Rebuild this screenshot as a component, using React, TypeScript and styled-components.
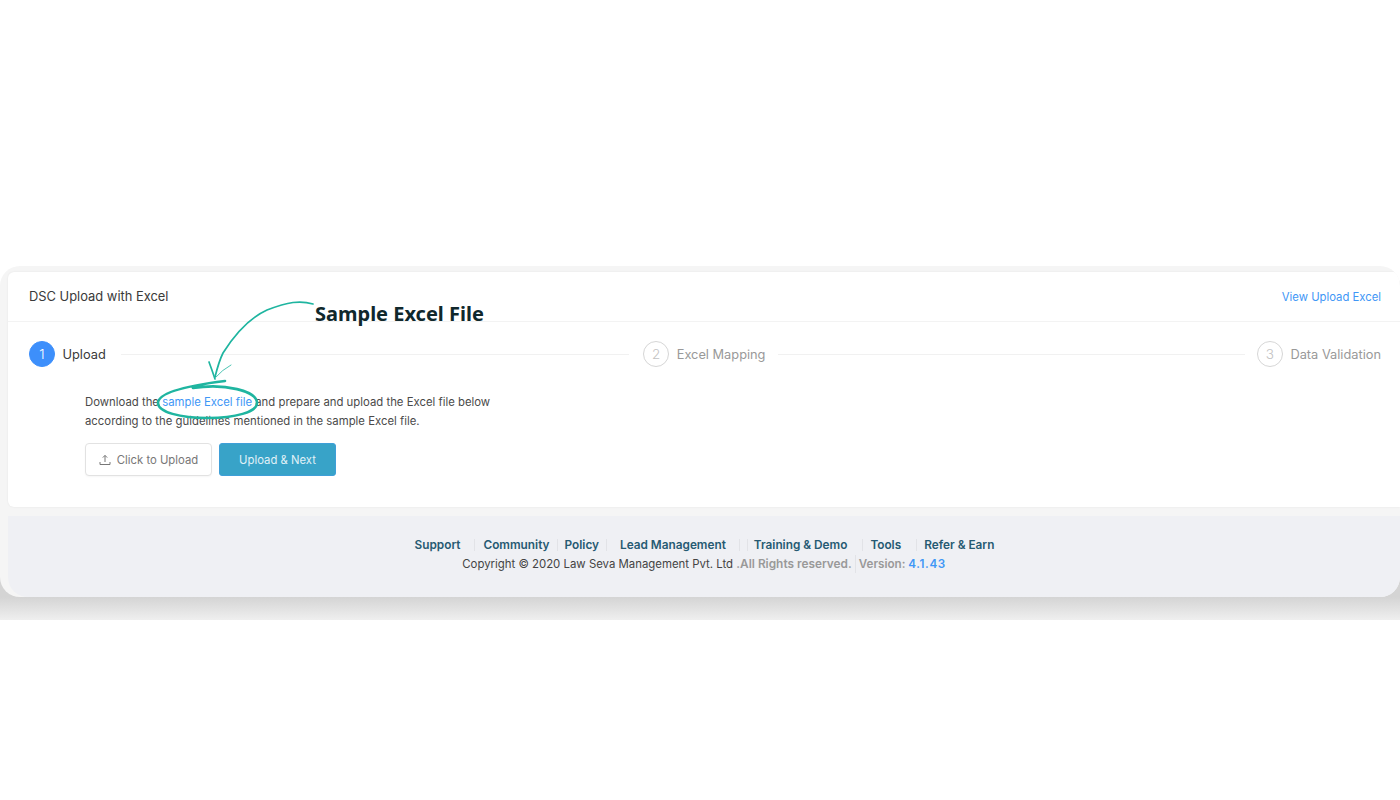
import React from 'react'
import styled, { createGlobalStyle } from 'styled-components'

const GlobalStyle = createGlobalStyle`
  html, body {
    margin: 0;
    padding: 0;
    background: #fff;
    font-family: Inter, "Liberation Sans", sans-serif;
    overflow: hidden;
  }
`

const Page = styled.div`
  width: 1400px;
  height: 800px;
  padding-top: 266px;
  box-sizing: border-box;
`

const ShadowBand = styled.div`
  padding-bottom: 23px;
  background: linear-gradient(
    to bottom,
    #fff 0,
    #fff 200px,
    #d4d4d4 200px,
    #d4d4d4 331px,
    #efefef 354px
  );
`

const Frame = styled.div`
  position: relative;
  height: 331px;
  box-sizing: border-box;
  padding: 6px 0 0 8px;
  background: #f5f5f5;
  border-radius: 20px;
  overflow: hidden;
`

const Card = styled.section`
  height: 235px;
  background: #fff;
  border-radius: 6px 0 0 6px;
  box-shadow: 0 0 2px rgba(0, 0, 0, 0.08);
`

const CardHeader = styled.header`
  height: 49px;
  display: flex;
  align-items: center;
  justify-content: space-between;
  padding: 0 19px 0 21px;
  border-bottom: 1px solid #f3f3f3;
`

const Title = styled.h1`
  margin: 0 0 1px;
  font-size: 12.9px;
  font-weight: 400;
  color: #3a3a3a;
`

const HeaderLink = styled.a`
  font-size: 11.3px;
  color: #3f97f6;
`

const Stepper = styled.div`
  display: flex;
  align-items: center;
  padding: 19px 19px 0 21px;
`

const Step = styled.div`
  display: flex;
  align-items: center;
  gap: 7.5px;
  flex: none;
`

const StepCircle = styled.span<{ $active?: boolean }>`
  width: 26px;
  height: 26px;
  box-sizing: border-box;
  border-radius: 50%;
  display: flex;
  align-items: center;
  justify-content: center;
  font-size: 13.5px;
  font-weight: 300;
  color: ${(p) => (p.$active ? '#fff' : '#c2c2c2')};
  background: ${(p) => (p.$active ? '#3d8ffb' : '#fff')};
  border: 1px solid ${(p) => (p.$active ? '#3d8ffb' : '#d6d6d6')};
`

const StepLabel = styled.span<{ $active?: boolean }>`
  font-size: 12.8px;
  color: ${(p) => (p.$active ? '#3a3a3a' : '#999')};
`

const StepLine = styled.div<{ $grow: number; $left: number; $right: number }>`
  flex: ${(p) => p.$grow} 1 0;
  height: 1px;
  background: #f1f1f1;
  margin: 0 ${(p) => p.$right}px 0 ${(p) => p.$left}px;
`

const Body = styled.div`
  padding: 26px 0 0 77px;
`

const Description = styled.p`
  margin: 0;
  width: 430px;
  font-size: 11.35px;
  line-height: 19px;
  color: #4a4a4a;
`

const InlineLink = styled.a`
  color: #3f97f6;
`

const Actions = styled.div`
  display: flex;
  gap: 7px;
  margin-top: 12px;
`

const OutlineButton = styled.button`
  width: 127px;
  height: 33px;
  display: flex;
  align-items: center;
  justify-content: center;
  gap: 6px;
  background: #fff;
  border: 1px solid #e2e2e2;
  border-radius: 4px;
  box-shadow: 0 1px 2px rgba(0, 0, 0, 0.04);
  font: 400 11.3px Inter, sans-serif;
  color: #777;
  padding: 0;
`

const PrimaryButton = styled.button`
  width: 117px;
  height: 33px;
  background: #38a3c8;
  border: 1px solid #3f9fd8;
  border-radius: 3px;
  font: 400 11.3px Inter, sans-serif;
  color: #e0f1f7;
  padding: 0;
`

const Footer = styled.footer`
  margin-top: 9px;
  height: 81px;
  background: #eff0f4;
  border-radius: 0 0 0 20px;
  display: flex;
  flex-direction: column;
  align-items: center;
  padding-top: 21px;
  box-sizing: border-box;
`

const FooterLinks = styled.nav`
  display: flex;
  align-items: center;
  height: 16px;
  margin-left: 1px;
`

const FooterLink = styled.a<{ $gap: number }>`
  font-size: 11.8px;
  font-weight: 600;
  color: #265a72;
  margin-right: ${(p) => p.$gap}px;
  white-space: nowrap;
`

const Divider = styled.span<{ $gap: number }>`
  width: 1px;
  height: 12px;
  background: #e2e3e7;
  margin-right: ${(p) => p.$gap}px;
`

const Copyright = styled.div`
  margin-top: 2px;
  font-size: 11.4px;
  line-height: 18px;
  color: #444;
  white-space: nowrap;
  display: flex;
  align-items: center;
`

const Muted = styled.span<{ $size: number }>`
  font-size: ${(p) => p.$size}px;
  font-weight: 600;
  color: #999;
  white-space: pre;
`

const VersionRow = styled.span`
  margin-left: 3px;
  padding-left: 3px;
  border-left: 1px solid #e2e3e7;
  white-space: pre;
`

const Version = styled.span`
  font-size: 11.65px;
  font-weight: 600;
  letter-spacing: 0.6px;
  color: #3f97f6;
`

const Overlay = styled.svg`
  position: absolute;
  left: 150px;
  top: 28px;
  pointer-events: none;
`

const Callout = styled.div`
  position: absolute;
  left: 315px;
  top: 34px;
  font-family: "Noto Sans", sans-serif;
  font-size: 20px;
  line-height: 28px;
  font-weight: 700;
  color: #10282c;
  white-space: nowrap;
`

const footerItems = [
  { label: 'Support', gap: 14, dividers: [8] },
  { label: 'Community', gap: 7, dividers: [7] },
  { label: 'Policy', gap: 7, dividers: [13] },
  { label: 'Lead Management', gap: 13, dividers: [7, 6] },
  { label: 'Training & Demo', gap: 15, dividers: [7] },
  { label: 'Tools', gap: 15, dividers: [7] },
  { label: 'Refer & Earn', gap: 0, dividers: [] },
]

export default function App() {
  return (
    <Page>
      <GlobalStyle />
      <ShadowBand>
        <Frame>
          <Card>
            <CardHeader>
              <Title>DSC Upload with Excel</Title>
              <HeaderLink>View Upload Excel</HeaderLink>
            </CardHeader>
            <Stepper>
              <Step>
                <StepCircle $active>1</StepCircle>
                <StepLabel $active>Upload</StepLabel>
              </Step>
              <StepLine $grow={509} $left={15} $right={14} />
              <Step>
                <StepCircle>2</StepCircle>
                <StepLabel>Excel Mapping</StepLabel>
              </Step>
              <StepLine $grow={467} $left={13} $right={12} />
              <Step>
                <StepCircle>3</StepCircle>
                <StepLabel>Data Validation</StepLabel>
              </Step>
            </Stepper>
            <Body>
              <Description>
                Download the <InlineLink>sample Excel file</InlineLink> and prepare and upload the
                Excel file below according to the guidelines mentioned in the sample Excel file.
              </Description>
              <Actions>
                <OutlineButton>
                  <svg width="12" height="12" viewBox="0 0 12 12" fill="none" stroke="#777" strokeWidth="1">
                    <path d="M6 8V1.5M3.8 3.6 6 1.4l2.2 2.2M1 8v2.5h10V8" />
                  </svg>
                  Click to Upload
                </OutlineButton>
                <PrimaryButton>Upload &amp; Next</PrimaryButton>
              </Actions>
            </Body>
          </Card>
          <Footer>
            <FooterLinks>
              {footerItems.map((item) => (
                <React.Fragment key={item.label}>
                  <FooterLink $gap={item.gap}>{item.label}</FooterLink>
                  {item.dividers.map((gap, i) => (
                    <Divider key={i} $gap={gap} />
                  ))}
                </React.Fragment>
              ))}
            </FooterLinks>
            <Copyright>
              Copyright © 2020 Law Seva Management Pvt. Ltd&nbsp;
              <Muted $size={11.85}>.All Rights reserved.</Muted>
              <VersionRow>
                <Muted $size={11.65}>Version: </Muted>
                <Version>4.1.43</Version>
              </VersionRow>
            </Copyright>
          </Footer>
          <Overlay width="170" height="130" viewBox="0 0 170 130" fill="none" stroke="#1fb5a0">
            {/* arrow */}
            <path
              d="M163 10C150 6 138 8 117 16C95 26 80 48 73 59C69 67 67 75 65 83"
              strokeWidth="1.7"
              strokeLinecap="round"
            />
            <path d="M59 68Q62 76 65 85" strokeWidth="1.7" strokeLinecap="round" />
            <path d="M66 83Q72 76 81 71" strokeWidth="0.8" strokeLinecap="round" />
            {/* circle round the link */}
            <path
              d="M43 94C75 89 107 97 107 109C107 118 85 124 58 124C30 124 8 118 8 109C8 99 35 92 75 87"
              strokeWidth="2.6"
              strokeLinecap="round"
            />
          </Overlay>
          <Callout>Sample Excel File</Callout>
        </Frame>
      </ShadowBand>
    </Page>
  )
}
